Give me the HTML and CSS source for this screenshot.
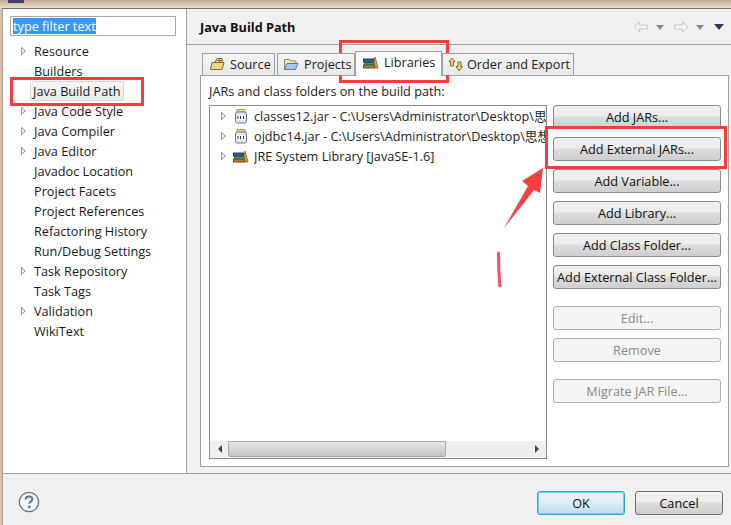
FILE: index.html
```html
<!DOCTYPE html>
<html lang="en">
<head>
<meta charset="utf-8">
<title>Java Build Path</title>
<link rel="stylesheet" href="styles.css">
</head>
<body>
<div class="window">
  <div class="chrome"><span class="app-icon"></span></div>
  <div class="dialog">
    <div class="main">
      <aside class="sidebar">
        <div class="filter"><span class="filter-sel">type filter text</span></div>
        <ul class="nav">
          <li class="nav-row"><span class="twisty"></span><span class="nav-label">Resource</span></li>
          <li class="nav-row"><span class="twisty-none"></span><span class="nav-label">Builders</span></li>
          <li class="nav-row"><span class="twisty-none"></span><span class="nav-label nav-current">Java Build Path</span></li>
          <li class="nav-row"><span class="twisty"></span><span class="nav-label">Java Code Style</span></li>
          <li class="nav-row"><span class="twisty"></span><span class="nav-label">Java Compiler</span></li>
          <li class="nav-row"><span class="twisty"></span><span class="nav-label">Java Editor</span></li>
          <li class="nav-row"><span class="twisty-none"></span><span class="nav-label">Javadoc Location</span></li>
          <li class="nav-row"><span class="twisty-none"></span><span class="nav-label">Project Facets</span></li>
          <li class="nav-row"><span class="twisty-none"></span><span class="nav-label">Project References</span></li>
          <li class="nav-row"><span class="twisty-none"></span><span class="nav-label">Refactoring History</span></li>
          <li class="nav-row"><span class="twisty-none"></span><span class="nav-label">Run/Debug Settings</span></li>
          <li class="nav-row"><span class="twisty"></span><span class="nav-label">Task Repository</span></li>
          <li class="nav-row"><span class="twisty-none"></span><span class="nav-label">Task Tags</span></li>
          <li class="nav-row"><span class="twisty"></span><span class="nav-label">Validation</span></li>
          <li class="nav-row"><span class="twisty-none"></span><span class="nav-label">WikiText</span></li>
        </ul>
      </aside>
      <section class="content">
        <header class="page-head">
          <h1 class="page-title">Java Build Path</h1>
          <div class="history">
            <svg class="hist-arrow" width="16" height="12" viewBox="0 0 16 12"><path d="M1 6 6.500 1v3H14.500v4H6.500v3z" fill="#f2f2f2" stroke="#c8c8c8"/></svg>
            <span class="hist-drop"></span>
            <svg class="hist-arrow" width="16" height="12" viewBox="0 0 16 12"><path d="M15 6 9.500 1v3H1.500v4H9.500v3z" fill="#f2f2f2" stroke="#c8c8c8"/></svg>
            <span class="hist-drop"></span>
            <span class="hist-menu"></span>
          </div>
        </header>
        <div class="tabs-area">
          <div class="tabs">
            <div class="tab tab-source">
              <svg width="16" height="14" viewBox="0 0 16 14"><path d="M1.500 12.500 3 5.500h3L8 1.500h5l.5 4h1.500l-2 7z" fill="#f4d48a" stroke="#8a6a2a"/><path d="M8 3.500h5M10.500 1.500v4M6 5.500h8" stroke="#8a6a2a" fill="none"/></svg>
              <span>Source</span>
            </div>
            <div class="tab tab-projects">
              <svg width="16" height="14" viewBox="0 0 16 14"><path d="M1.500 12.500V2.500h5l1.500 1.500h5v2" fill="#f5e2a8" stroke="#9a8a5a"/><path d="M1.500 12.500 4 6.500h11l-2.500 6z" fill="#a9c8ec" stroke="#5a7aa5"/></svg>
              <span>Projects</span>
            </div>
            <div class="tab tab-active">
              <svg width="16" height="14" viewBox="0 0 16 14"><rect x="0.500" y="10" width="11" height="3" fill="#c8743a" stroke="#7a4a2a"/><rect x="1.500" y="7" width="10" height="3" fill="#3f9a58" stroke="#2a6a3a"/><rect x="0.500" y="4" width="10" height="3" fill="#3a5aa0" stroke="#2a3a6a"/><path d="M12 2l3 11h-2.500L11 7z" fill="#e8b030" stroke="#9a7020"/></svg>
              <span>Libraries</span>
            </div>
            <div class="tab tab-order">
              <svg width="16" height="15" viewBox="0 0 16 15"><path d="M4 1 7 4.500H5.500V9h-3V4.500H1z" fill="#f4d070" stroke="#8a6a2a"/><path d="M11 14 14.500 9.500H13V5h-3v4.500H8z" fill="#f4d070" stroke="#8a6a2a"/></svg>
              <span>Order and Export</span>
            </div>
          </div>
          <div class="panel">
            <p class="panel-label">JARs and class folders on the build path:</p>
            <div class="panel-body">
              <div class="tree">
                <ul class="tree-rows">
                  <li class="tree-row"><span class="twisty"></span>
                    <svg class="tree-icon" width="12" height="15" viewBox="0 0 12 15"><rect x="2" y="0.500" width="8" height="2.500" fill="#f2d890" stroke="#b89a50"/><rect x="0.500" y="3" width="11" height="11" rx="2" fill="#dfe8f4" stroke="#6a7a95"/><rect x="2" y="6" width="8" height="5" fill="#fff"/><path d="M3 7v3M5.500 7v3M8.500 7v3" stroke="#333"/></svg>
                    <span class="tree-text">classes12.jar - C:\Users\Administrator\Desktop\思想汇报\lib\classes12.jar</span></li>
                  <li class="tree-row"><span class="twisty"></span>
                    <svg class="tree-icon" width="12" height="15" viewBox="0 0 12 15"><rect x="2" y="0.500" width="8" height="2.500" fill="#f2d890" stroke="#b89a50"/><rect x="0.500" y="3" width="11" height="11" rx="2" fill="#dfe8f4" stroke="#6a7a95"/><rect x="2" y="6" width="8" height="5" fill="#fff"/><path d="M3 7v3M5.500 7v3M8.500 7v3" stroke="#333"/></svg>
                    <span class="tree-text">ojdbc14.jar - C:\Users\Administrator\Desktop\思想汇报\lib\ojdbc14.jar</span></li>
                  <li class="tree-row"><span class="twisty"></span>
                    <svg class="tree-icon tree-icon-lib" width="16" height="14" viewBox="0 0 16 14"><rect x="0.500" y="10" width="11" height="3" fill="#c8743a" stroke="#7a4a2a"/><rect x="1.500" y="7" width="10" height="3" fill="#3f9a58" stroke="#2a6a3a"/><rect x="0.500" y="4" width="10" height="3" fill="#3a5aa0" stroke="#2a3a6a"/><path d="M12 2l3 11h-2.500L11 7z" fill="#e8b030" stroke="#9a7020"/></svg>
                    <span class="tree-text">JRE System Library [JavaSE-1.6]</span></li>
                </ul>
                <div class="hscroll">
                  <span class="sb-btn"><span class="sb-left"></span></span>
                  <span class="sb-thumb"></span>
                  <span class="sb-track"></span>
                  <span class="sb-btn"><span class="sb-right"></span></span>
                </div>
              </div>
              <div class="actions">
                <div class="btn">Add JARs...</div>
                <div class="btn">Add External JARs...</div>
                <div class="btn">Add Variable...</div>
                <div class="btn">Add Library...</div>
                <div class="btn">Add Class Folder...</div>
                <div class="btn">Add External Class Folder...</div>
                <div class="btn btn-off btn-gap-edit">Edit...</div>
                <div class="btn btn-off">Remove</div>
                <div class="btn btn-off btn-gap-migrate">Migrate JAR File...</div>
              </div>
            </div>
          </div>
        </div>
      </section>
    </div>
    <footer class="footer">
      <svg class="help" width="22" height="22" viewBox="0 0 22 22"><circle cx="11" cy="11" r="9.700" fill="#f4f6fa" stroke="#5f7499" stroke-width="1.300"/><path d="M7.700 8.500c0-2 1.500-3 3.300-3s3.400 1 3.400 2.800c0 2.300-3.100 2.300-3.100 4.500" fill="none" stroke="#5f7499" stroke-width="2"/><circle cx="11.300" cy="15.800" r="1.400" fill="#5f7499"/></svg>
      <div class="footer-btns">
        <div class="btn-foot btn-ok">OK</div>
        <div class="btn-foot btn-cancel">Cancel</div>
      </div>
    </footer>
  </div>

  <span class="mark mark-nav"></span>
  <span class="mark mark-tab"></span>
  <span class="mark mark-btn"></span>
  <svg class="scribble" width="731" height="525" viewBox="0 0 731 525">
    <path d="M543 168 522 181 528 186 504 228 534 190 540 193z" fill="#f94040"/>
    <path d="M498.500 253 498.800 270 499.800 286" fill="none" stroke="#f45060" stroke-width="3" stroke-linecap="round"/>
  </svg>
</div>
</body>
</html>
```

FILE: styles.css
```css
* { box-sizing: border-box; }
html, body { margin: 0; padding: 0; }
body { width: 731px; height: 525px; overflow: hidden; background: #f0f0f0; }
ul { list-style: none; margin: 0; padding: 0; }
h1, p { margin: 0; }

.window {
  position: relative;
  width: 731px;
  height: 525px;
  display: flex;
  flex-direction: column;
  font: 12.7px/20px "Open Sans", "Noto Sans CJK SC", sans-serif;
  color: #1a1a1a;
  overflow: hidden;
  background: linear-gradient(90deg, #dcc0a0 0, #dcc0a0 2px, transparent 2px);
}
.chrome {
  position: relative;
  height: 8px;
  flex: none;
  background: linear-gradient(#c4ad95, #ecdccc);
}
.app-icon { position: absolute; left: 8px; top: 0; width: 16px; height: 3px; background: #4a3f63; }

.dialog {
  flex: 1;
  min-height: 0;
  margin-left: 2px;
  display: flex;
  flex-direction: column;
  border-top: 1px solid #707070;
  border-left: 1px solid #a0a0a0;
  background: #f0f0f0;
}
.main { flex: none; height: 464px; display: flex; }

.sidebar {
  flex: none;
  width: 184px;
  background: #fff;
  border-right: 1px solid #a0a0a0;
  padding: 7px 0 0 7px;
}
.filter {
  width: 166px;
  height: 20px;
  border: 1px solid #a8a8a8;
  padding-left: 2px;
  display: flex;
  align-items: center;
}
.filter-sel { background: #3399ff; color: #fff; height: 16px; line-height: 16px; }
.nav { margin: 5px 0 0 -7px; }
.nav-row { height: 20px; display: flex; align-items: center; padding-left: 15px; }
.twisty {
  flex: none;
  width: 5px;
  height: 9px;
  margin: 0 5px 0 3px;
  position: relative;
  background: #9a9a9a;
  clip-path: polygon(0 0, 100% 50%, 0 100%);
}
.twisty::before {
  content: "";
  position: absolute;
  left: 1px;
  top: 2px;
  width: 2.500px;
  height: 5px;
  background: #fff;
  clip-path: polygon(0 0, 100% 50%, 0 100%);
}
.twisty-none { flex: none; width: 13px; }
.nav-label { padding: 0 3px; height: 20px; line-height: 20px; }
.nav-current {
  margin-left: -1px;
  background: linear-gradient(#f6f6f6, #ececec);
  border: 1px solid #d8d8d8;
  border-radius: 2px;
  line-height: 18px;
  padding: 0 0 0 2px;
  width: 94px;
  white-space: nowrap;
}

.content { flex: 1; min-width: 0; display: flex; flex-direction: column; }
.page-head {
  flex: none;
  height: 36px;
  border-bottom: 1px solid #a0a0a0;
  display: flex;
  align-items: center;
  justify-content: space-between;
  padding: 1px 7px 0 13px;
}
.page-title { font-size: 12.7px; font-weight: 700; line-height: 20px; color: #111; }
.history { display: flex; align-items: center; }
.hist-arrow { flex: none; }
.hist-drop { width: 0; height: 0; border: 4px solid transparent; border-top: 5px solid #8a8a8a; border-bottom: 0; margin: 0 9px 0 7px; }
.hist-menu { width: 0; height: 0; border: 5px solid transparent; border-top: 6px solid #3a3560; border-bottom: 0; margin-left: 1px; }

.tabs-area { flex: 1; min-height: 0; padding: 8px 2px 6px 13px; display: flex; flex-direction: column; }
.tabs { flex: none; height: 22px; display: flex; align-items: flex-end; margin-left: 2px; position: relative; z-index: 1; }
.tab {
  height: 22px;
  display: flex;
  align-items: center;
  gap: 5px;
  padding: 0 0 1px 6px;
  background: linear-gradient(#f4f4f4, #e8e8e8);
  border: 1px solid #a0a0a0;
  border-bottom: 0;
  white-space: nowrap;
  color: #222;
  overflow: hidden;
}
.tab-source { width: 73px; margin-right: 2px; }
.tab-projects { width: 78px; padding-left: 5px; }
.tab-active { width: 87px; height: 25px; background: #fff; margin-bottom: -1px; padding-left: 7px; padding-bottom: 4px; }
.tab-order { width: 132px; padding-left: 5px; gap: 3px; }

.panel {
  flex: 1;
  min-height: 0;
  background: #fff;
  border: 1px solid #a0a0a0;
  padding: 5px 7px 7px 8px;
  display: flex;
  flex-direction: column;
}
.panel-label { flex: none; height: 20px; line-height: 20px; color: #222; }
.panel-body { flex: 1; min-height: 0; display: flex; margin-top: 4px; }
.tree {
  flex: none;
  width: 338px;
  border: 1px solid #8c8c8c;
  display: flex;
  flex-direction: column;
  background: #fff;
}
.tree-rows { flex: 1; min-height: 0; overflow: hidden; }
.tree-row { height: 20px; display: flex; align-items: center; padding-left: 8px; white-space: nowrap; }
.tree-row .twisty { margin-right: 9px; }
.tree-icon { flex: none; margin-right: 7px; }
.tree-icon-lib { margin-left: -2px; margin-right: 5px; }
.tree-text { color: #222; overflow: hidden; }
.hscroll { flex: none; height: 17px; display: flex; align-items: stretch; background: #efefef; padding: 0 1px 1px; }
.sb-btn { flex: none; width: 17px; display: flex; align-items: center; justify-content: center; }
.sb-left { width: 0; height: 0; border: 4px solid transparent; border-right: 4px solid #444; border-left: 0; }
.sb-right { width: 0; height: 0; border: 4px solid transparent; border-left: 4px solid #444; border-right: 0; }
.sb-thumb { flex: none; width: 218px; border: 1px solid #a8a8a8; border-radius: 2px; background: linear-gradient(#e8e8e8, #c4c4c4); }
.sb-track { flex: 1; }

.actions { flex: none; width: 168px; margin-left: 6px; display: flex; flex-direction: column; gap: 8px; }
.btn {
  flex: none;
  height: 24px;
  border: 1px solid #8a8a8a;
  border-radius: 3px;
  background: linear-gradient(#f2f2f2 0, #ebebeb 45%, #dcdcdc 50%, #cfcfcf 100%);
  text-align: center;
  line-height: 22px;
  white-space: nowrap;
  color: #111;
}
.btn-off { background: #f4f4f4; border-color: #b0b0b0; color: #8a8a8a; }
.btn-gap-edit { margin-top: 9px; }
.btn-gap-migrate { margin-top: 9px; }

.footer { flex: 1; min-height: 0; position: relative; display: flex; align-items: flex-start; justify-content: space-between; border-top: 1px solid #a0a0a0; }
.help { margin: 17px 0 0 15px; }
.footer-btns { display: flex; gap: 10px; margin: 17px 8px 0 0; }
.btn-foot { width: 88px; height: 24px; border: 1px solid #707070; border-radius: 3px; text-align: center; line-height: 22px; color: #111; }
.btn-ok { background: linear-gradient(#ecf5fb, #dcecf6 50%, #bcdcec); border-color: #3c9fd0; box-shadow: inset 0 0 0 1px #6fd0f0; }
.btn-cancel { background: linear-gradient(#f2f2f2, #ebebeb 45%, #dcdcdc 50%, #cfcfcf); }

.mark { position: absolute; border: 3px solid #f83c3c; pointer-events: none; }
.mark-nav { left: 10px; top: 77px; width: 134px; height: 29px; }
.mark-tab { left: 339px; top: 40px; width: 110px; height: 43px; }
.mark-btn { left: 545px; top: 126px; width: 182px; height: 43px; }
.scribble { position: absolute; left: 0; top: 0; pointer-events: none; }
```
